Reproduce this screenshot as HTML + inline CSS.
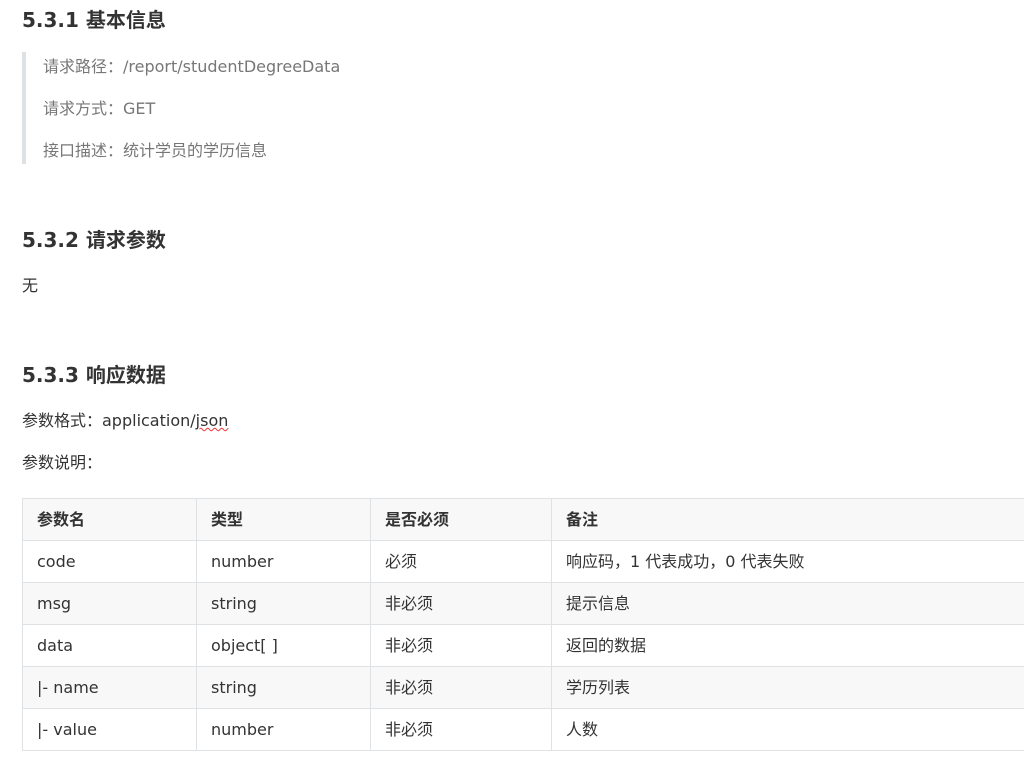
<!DOCTYPE html>
<html><head><meta charset="utf-8"><style>
body{margin:0;width:1024px;height:768px;overflow:hidden;background:#fff;font-family:"DejaVu Sans","Noto Sans CJK SC",sans-serif;color:#333;position:relative}
.a{position:absolute;white-space:nowrap;line-height:20px}
.h{font-size:20px;font-weight:bold;color:#333;line-height:24px}
.t{font-size:16px}
.g{color:#777}
.bar{position:absolute;left:22px;top:52px;width:4px;height:112px;background:#dfe2e5}
table{position:absolute;left:22px;top:498px;width:1010px;border-collapse:collapse;font-size:16px;color:#333}
td,th{border:1px solid #dfe2e5;height:41px;line-height:40px;padding:0 14px;text-align:left;vertical-align:middle;white-space:nowrap}
th{font-weight:bold;background:#f8f8f8}
tr.s td{background:#f8f8f8}
.sq{text-decoration:underline wavy #e33;text-decoration-thickness:1px}
</style></head><body>
<div class="a h" style="left:22px;top:8px">5.3.1 基本信息</div>
<div class="bar"></div>
<div class="a t g" style="left:43px;top:57px">请求路径：/report/studentDegreeData</div>
<div class="a t g" style="left:43px;top:99px">请求方式：GET</div>
<div class="a t g" style="left:43px;top:141px">接口描述：统计学员的学历信息</div>
<div class="a h" style="left:22px;top:228px">5.3.2 请求参数</div>
<div class="a t" style="left:22px;top:276px">无</div>
<div class="a h" style="left:22px;top:363px">5.3.3 响应数据</div>
<div class="a t" style="left:22px;top:411px">参数格式：application/<span class="sq">json</span></div>
<div class="a t" style="left:22px;top:453px">参数说明：</div>
<table>
<colgroup><col style="width:174px"><col style="width:174px"><col style="width:181px"><col></colgroup>
<tr><th>参数名</th><th>类型</th><th>是否必须</th><th>备注</th></tr>
<tr><td>code</td><td>number</td><td>必须</td><td>响应码，1 代表成功，0 代表失败</td></tr>
<tr class="s"><td>msg</td><td>string</td><td>非必须</td><td>提示信息</td></tr>
<tr><td>data</td><td>object[ ]</td><td>非必须</td><td>返回的数据</td></tr>
<tr class="s"><td>|- name</td><td>string</td><td>非必须</td><td>学历列表</td></tr>
<tr><td>|- value</td><td>number</td><td>非必须</td><td>人数</td></tr>
</table>
</body></html>
